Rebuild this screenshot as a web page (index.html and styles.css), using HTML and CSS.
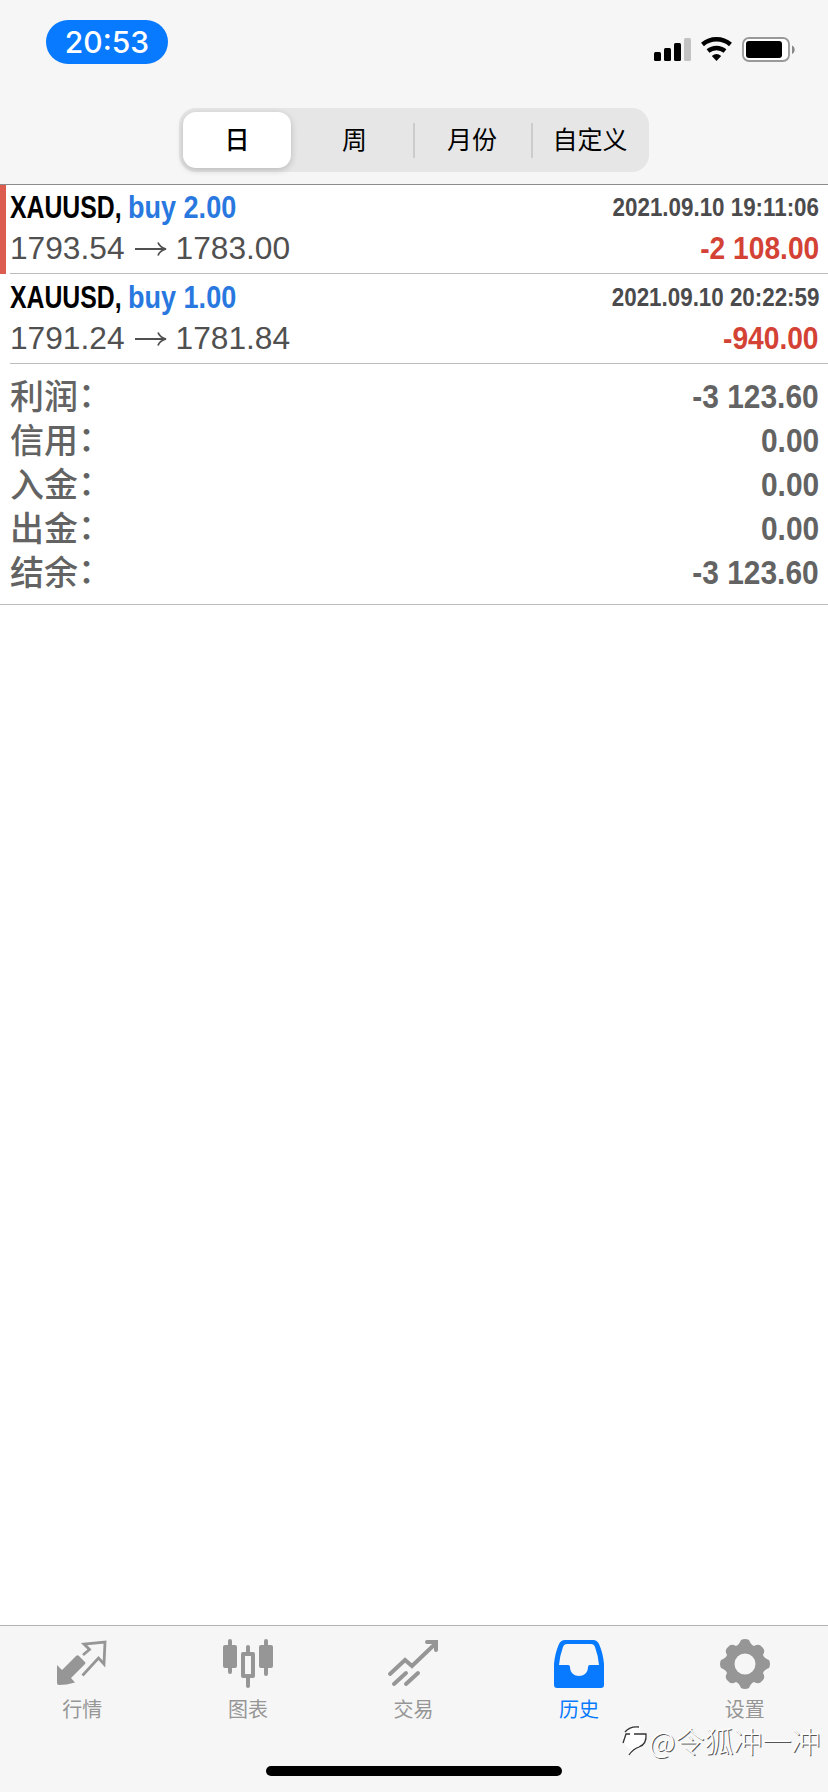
FILE: index.html
```html
<!DOCTYPE html>
<html lang="zh-CN">
<head>
<meta charset="utf-8">
<title>历史</title>
<link rel="stylesheet" href="styles.css">
</head>
<body>
<div class="screen">
  <header class="header">
    <div class="status">
      <div class="clock">20:53</div>
      <svg class="indicators" width="144" height="28" viewBox="0 0 144 28">
        <rect x="1" y="16" width="7" height="9" rx="1.5"/>
        <rect x="11" y="12" width="7" height="13" rx="1.5"/>
        <rect x="21" y="7" width="7" height="18" rx="1.5"/>
        <rect x="31" y="2" width="7" height="23" rx="1.5" fill="#c2c2c2"/>
        <path d="M49.500 8.500a21.500 21.500 0 0 1 28 0M55 15a13.500 13.500 0 0 1 17 0" fill="none" stroke="#000" stroke-width="4.400"/>
        <path d="M58.800 20a7.500 7.500 0 0 1 9.400 0l-4.700 5z"/>
        <rect x="90" y="2" width="46" height="23" rx="6" fill="#fff" stroke="#999" stroke-width="1.800"/>
        <rect x="93" y="5" width="36" height="17" rx="3"/>
        <path d="M139 9.500c3.600 1.500 3.600 7 0 8.500z" fill="#888"/>
      </svg>
    </div>
    <div class="segments">
      <div class="segment selected">日</div>
      <div class="segment">周</div>
      <div class="segment divided">月份</div>
      <div class="segment divided">自定义</div>
    </div>
  </header>

  <main class="content">
    <section class="deal marked">
      <div class="line"><span class="symbol">XAUUSD,</span><span class="side">buy 2.00</span><span class="time">2021.09.10 19:11:06</span></div>
      <div class="line"><span class="price">1793.54</span><svg class="arrow" width="32" height="24" viewBox="0 0 32 24"><path d="M0 12h30M23 5.500q2 5 8 6.500q-6 1.500-8 6.500"/></svg><span class="price">1783.00</span><span class="loss">-2 108.00</span></div>
    </section>
    <section class="deal">
      <div class="line"><span class="symbol">XAUUSD,</span><span class="side">buy 1.00</span><span class="time">2021.09.10 20:22:59</span></div>
      <div class="line"><span class="price">1791.24</span><svg class="arrow" width="32" height="24" viewBox="0 0 32 24"><path d="M0 12h30M23 5.500q2 5 8 6.500q-6 1.500-8 6.500"/></svg><span class="price">1781.84</span><span class="loss">-940.00</span></div>
    </section>
    <section class="summary">
      <div class="total"><span class="label">利润<span class="colon">：</span></span><span class="value">-3 123.60</span></div>
      <div class="total"><span class="label">信用<span class="colon">：</span></span><span class="value">0.00</span></div>
      <div class="total"><span class="label">入金<span class="colon">：</span></span><span class="value">0.00</span></div>
      <div class="total"><span class="label">出金<span class="colon">：</span></span><span class="value">0.00</span></div>
      <div class="total"><span class="label">结余<span class="colon">：</span></span><span class="value">-3 123.60</span></div>
    </section>
  </main>

  <nav class="tabs">
    <div class="tab">
      <svg class="icon" viewBox="0 0 50 50">
        <path d="M0 26L5 31L19 17Q20.500 15.500 22 17L28 23Q29 24 28 25L14 39L18 43.500Q9 46 2 46Q0 46 0 44Z"/>
        <path d="M26 16L32.500 10.500L27 5L48 3L47 25L41.500 19L25.500 36.500" fill="none" stroke="currentColor" stroke-width="2.800"/>
      </svg>
      <span>行情</span>
    </div>
    <div class="tab">
      <svg class="icon" viewBox="0 0 50 50">
        <rect x="0" y="6" width="14" height="23" rx="2"/><rect x="5" y="0" width="4" height="35" rx="2"/>
        <rect x="36" y="6" width="14" height="23" rx="2"/><rect x="41" y="0" width="4" height="37" rx="2"/>
        <rect x="20" y="15" width="10" height="22" fill="none" stroke="currentColor" stroke-width="4" stroke-linejoin="round"/>
        <rect x="23" y="6" width="4" height="9" rx="2"/><rect x="23" y="37" width="4" height="12" rx="2"/>
      </svg>
      <span>图表</span>
    </div>
    <div class="tab">
      <svg class="icon stroked" viewBox="0 0 50 50">
        <path d="M2 35L17 21L24 27L47 5M39 3H48V11M6 45L18 34M18 45L30 34"/>
      </svg>
      <span>交易</span>
    </div>
    <div class="tab active">
      <svg class="icon" viewBox="0 0 50 50">
        <path fill-rule="evenodd" d="M11 1H39Q43 1 45 5Q49 14 50 25V46Q50 49 47 49H3Q0 49 0 46V25Q1 14 5 5Q7 1 11 1ZM13 5Q10 5 9 8Q6 16 5 26H14Q16 26 16 28C16 40 34 40 34 28Q34 26 36 26H45Q44 16 41 8Q40 5 37 5Z"/>
      </svg>
      <span>历史</span>
    </div>
    <div class="tab">
      <svg class="icon" viewBox="0 0 50 50">
        <path fill-rule="evenodd" d="M21 1Q25-1 29 1Q31 6 34 7Q39 4 42 8Q46 11 43 16Q44 19 49 21Q51 25 49 29Q44 31 43 34Q46 39 42 42Q39 46 34 43Q31 44 29 49Q25 51 21 49Q19 44 16 43Q11 46 8 42Q4 39 7 34Q6 31 1 29Q-1 25 1 21Q6 19 7 16Q4 11 8 8Q11 4 16 7Q19 6 21 1ZM25 14.500A10.500 10.500 0 1 0 25 35.500A10.500 10.500 0 1 0 25 14.500Z"/>
      </svg>
      <span>设置</span>
    </div>
  </nav>
  <div class="watermark">
    <svg width="28" height="34" viewBox="0 0 28 34"><path d="M6 8Q12 1 20 2Q17 6 20 10H25Q27 18 20 23Q15 25 12 27L8 31L10 25Q3 23 4 16L1 14Z" fill="#fff"/><path d="M2 19L5 10H9M4 8Q9 2 18 3M13 10H25Q26 20 18 23M18 23Q12 25 8 31" fill="none" stroke="#333" stroke-width="1.300"/></svg>
    <span>@令狐冲一冲</span>
  </div>
  <div class="home"></div>
</div>
</body>
</html>
```
FILE: styles.css
```css
body { margin: 0; }
.screen {
  position: relative;
  display: flex;
  flex-direction: column;
  width: 828px;
  height: 1792px;
  background: #fff;
  font-family: "Liberation Sans", "Noto Sans CJK SC", sans-serif;
  overflow: hidden;
}
.header {
  box-sizing: border-box;
  height: 185px;
  background: #f6f6f6;
  border-bottom: 1px solid #8c8c8c;
}
.status {
  display: flex;
  justify-content: space-between;
  padding: 20px 31px 0 46px;
  height: 88px;
}
.clock {
  width: 122px;
  height: 44px;
  border-radius: 22px;
  background: #087aff;
  color: #fff;
  font: 500 30px/45px Inter, sans-serif;
  text-align: center;
}
.indicators { margin-top: 16px; }
.segments {
  box-sizing: border-box;
  display: grid;
  grid-template-columns: 117px 117px 118px 118px;
  width: 470px;
  height: 64px;
  margin-left: 179px;
  padding: 4px 0;
  border-radius: 17px;
  background: #e6e6e6;
}
.segment {
  height: 56px;
  font: 400 25px/53px "Noto Sans CJK SC", sans-serif;
  text-align: center;
  color: #000;
}
.selected {
  width: 108px;
  margin-left: 4px;
  border-radius: 13px;
  background: #fff;
  box-shadow: 0 2px 7px rgba(0, 0, 0, .2);
  font-weight: 500;
}
.divided {
  background: linear-gradient(#ccc, #ccc) 0 50% / 2px 35px no-repeat;
}
.content { flex: 1; }
.deal {
  box-sizing: border-box;
  display: grid;
  grid-template-rows: 43px 39px;
  height: 90px;
  padding: 2px 10px 0;
  background: linear-gradient(#bcbcbc, #bcbcbc) 10px 100% / 100% 1px no-repeat;
}
.marked {
  height: 89px;
  padding-top: 1px;
  box-shadow: inset 6px 0 #dc5c50;
}
.line {
  display: flex;
  align-items: center;
  white-space: nowrap;
}
.symbol, .side {
  font-size: 32px;
  font-weight: 700;
  transform-origin: left center;
}
.symbol { width: 118px; color: #000; transform: scaleX(.775); }
.side { color: #2878e0; transform: scaleX(.845); }
.time, .loss, .value {
  margin-left: auto;
  font-weight: 700;
  transform-origin: right center;
}
.time { color: #4b4b4d; font-size: 26px; transform: translateX(1px) scaleX(.86); }
.loss { color: #d34234; font-size: 32px; transform: translateX(1px) scaleX(.88); }
.price { color: #505050; font-size: 31.700px; }
.arrow {
  margin: 0 9px 0 10px;
  fill: none;
  stroke: #505050;
  stroke-width: 1.800;
}
.summary {
  box-sizing: border-box;
  height: 241px;
  padding: 10px 10px 0;
  border-bottom: 1px solid #bcbcbc;
}
.total {
  display: flex;
  align-items: center;
  height: 44px;
  color: #636363;
}
.label { font: 500 34px/42px "Noto Sans CJK SC", sans-serif; margin-top: -2px; }
.colon { display: inline-block; transform: translateY(-2px); }
.value {
  font-size: 34px;
  transform: translateX(1px) scaleX(.88);
}
.tabs {
  box-sizing: border-box;
  display: grid;
  grid-template-columns: repeat(5, 1fr);
  height: 167px;
  padding-top: 13px;
  background: #f6f6f6;
  border-top: 1px solid #b2b2b2;
}
.tab {
  display: flex;
  flex-direction: column;
  align-items: center;
  color: #969696;
  font: 400 20px/28px "Noto Sans CJK SC", sans-serif;
}
.tab span { margin: 6px 0 0 -1px; }
.active { color: #087aff; }
.icon { width: 50px; height: 50px; margin-left: -1px; fill: currentColor; overflow: visible; }
.stroked { fill: none; stroke: currentColor; stroke-width: 4; stroke-linecap: round; }
.watermark {
  position: absolute;
  left: 621px;
  top: 1724px;
  display: flex;
  align-items: center;
  color: #fff;
  font: 300 29px/34px "Noto Sans CJK SC", sans-serif;
  text-shadow: 1px 1px 0 #555;
  white-space: nowrap;
}
.watermark span { margin-top: -3px; }
.home {
  position: absolute;
  left: 266px;
  top: 1766px;
  width: 296px;
  height: 10px;
  border-radius: 5px;
  background: #000;
}
```
